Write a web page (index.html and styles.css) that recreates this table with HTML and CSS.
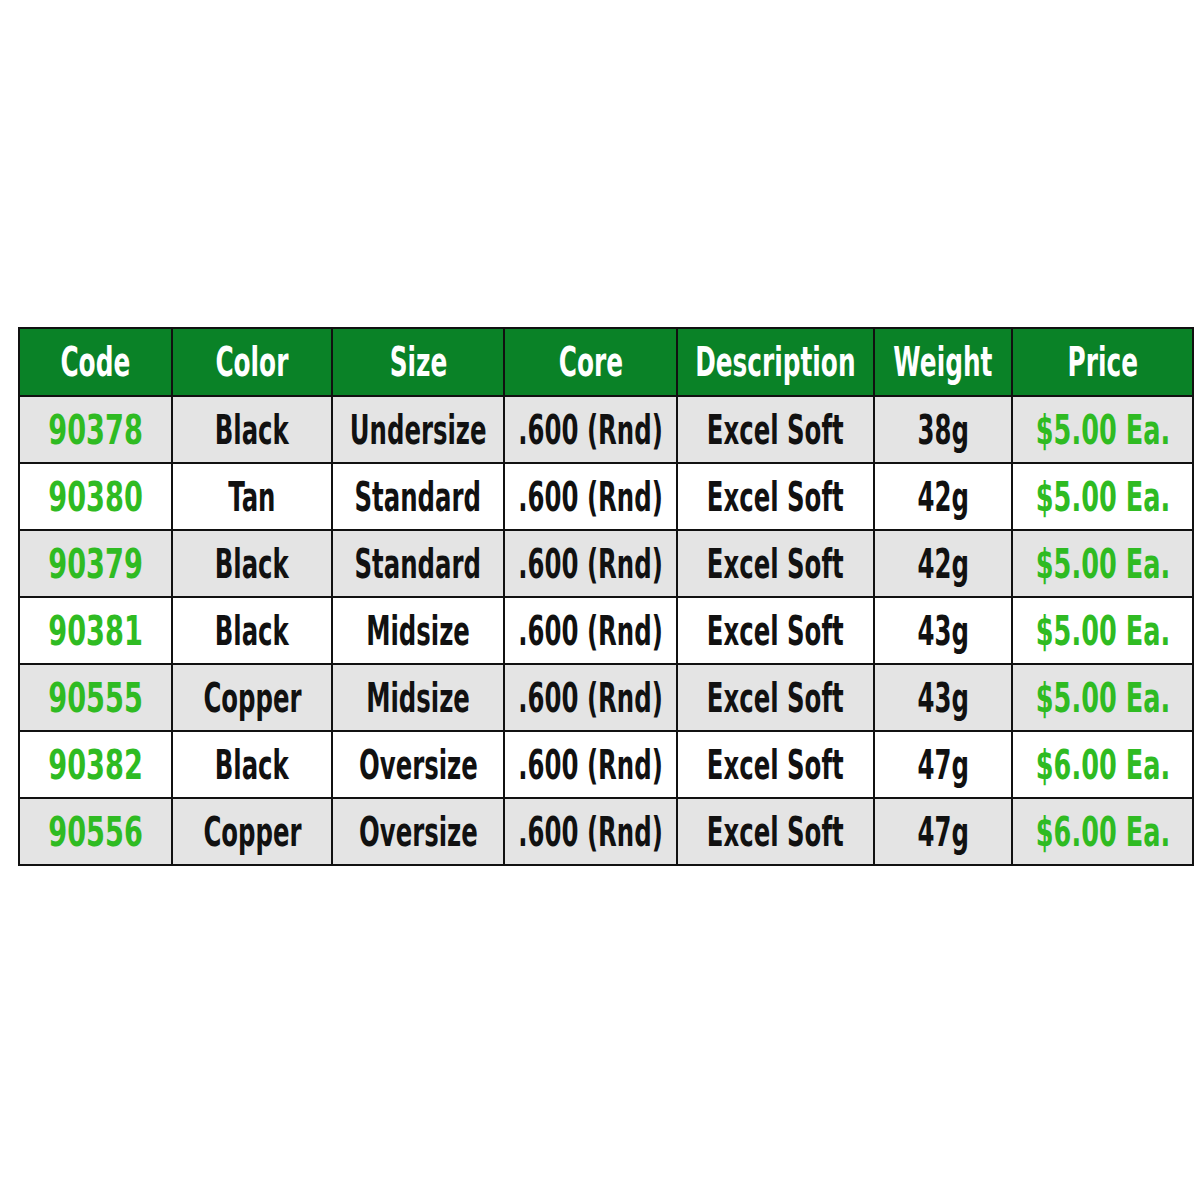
FILE: index.html
```html
<!DOCTYPE html>
<html>
<head>
<meta charset="utf-8">
<link rel="stylesheet" href="styles.css">
</head>
<body>
<div class="wrap">
<table class="grid">
<colgroup>
<col class="c1"><col class="c2"><col class="c3"><col class="c4"><col class="c5"><col class="c6"><col class="c7">
</colgroup>
<thead>
<tr><th><span>Code</span></th><th><span>Color</span></th><th><span>Size</span></th><th><span>Core</span></th><th><span>Description</span></th><th><span>Weight</span></th><th><span>Price</span></th></tr>
</thead>
<tbody>
<tr class="alt"><td class="code"><span>90378</span></td><td><span>Black</span></td><td><span>Undersize</span></td><td><span>.600 (Rnd)</span></td><td><span>Excel Soft</span></td><td><span>38g</span></td><td class="price"><span>$5.00 Ea.</span></td></tr>
<tr><td class="code"><span>90380</span></td><td><span>Tan</span></td><td><span>Standard</span></td><td><span>.600 (Rnd)</span></td><td><span>Excel Soft</span></td><td><span>42g</span></td><td class="price"><span>$5.00 Ea.</span></td></tr>
<tr class="alt"><td class="code"><span>90379</span></td><td><span>Black</span></td><td><span>Standard</span></td><td><span>.600 (Rnd)</span></td><td><span>Excel Soft</span></td><td><span>42g</span></td><td class="price"><span>$5.00 Ea.</span></td></tr>
<tr><td class="code"><span>90381</span></td><td><span>Black</span></td><td><span>Midsize</span></td><td><span>.600 (Rnd)</span></td><td><span>Excel Soft</span></td><td><span>43g</span></td><td class="price"><span>$5.00 Ea.</span></td></tr>
<tr class="alt"><td class="code"><span>90555</span></td><td><span>Copper</span></td><td><span>Midsize</span></td><td><span>.600 (Rnd)</span></td><td><span>Excel Soft</span></td><td><span>43g</span></td><td class="price"><span>$5.00 Ea.</span></td></tr>
<tr><td class="code"><span>90382</span></td><td><span>Black</span></td><td><span>Oversize</span></td><td><span>.600 (Rnd)</span></td><td><span>Excel Soft</span></td><td><span>47g</span></td><td class="price"><span>$6.00 Ea.</span></td></tr>
<tr class="alt"><td class="code"><span>90556</span></td><td><span>Copper</span></td><td><span>Oversize</span></td><td><span>.600 (Rnd)</span></td><td><span>Excel Soft</span></td><td><span>47g</span></td><td class="price"><span>$6.00 Ea.</span></td></tr>
</tbody>
</table>
</div>
</body>
</html>
```

FILE: styles.css
```css
html, body {
  margin: 0;
  padding: 0;
  background: #ffffff;
}
.wrap {
  padding: 327px 0 0 18px;
}
.grid {
  border-collapse: collapse;
  table-layout: fixed;
  width: 1174px;
  font-family: "DejaVu Sans", sans-serif;
  font-weight: bold;
  font-size: 40px;
}
.c1 { width: 153px; }
.c2 { width: 160px; }
.c3 { width: 172px; }
.c4 { width: 173px; }
.c5 { width: 197px; }
.c6 { width: 138px; }
.c7 { width: 181px; }
.grid th, .grid td {
  border: 2px solid #111111;
  text-align: center;
  padding: 0;
  white-space: nowrap;
  overflow: visible;
}
.grid th span, .grid td span {
  display: inline-block;
  transform: scaleX(0.61);
  transform-origin: center;
  margin: 0 -40px;
}
.grid th {
  height: 66px;
  background: #0a8227;
  color: #ffffff;
  font-weight: bold;
}
.grid th span {
  transform: scaleX(0.62);
}
.grid td {
  height: 65px;
  color: #111111;
  background: #ffffff;
}
.grid tr.alt td {
  background: #e4e4e4;
}
.grid td.code, .grid td.price {
  color: #2fbb22;
}
.grid td.code span {
  transform: scaleX(0.68);
}
.grid td.price span {
  transform: scaleX(0.64);
}
```
